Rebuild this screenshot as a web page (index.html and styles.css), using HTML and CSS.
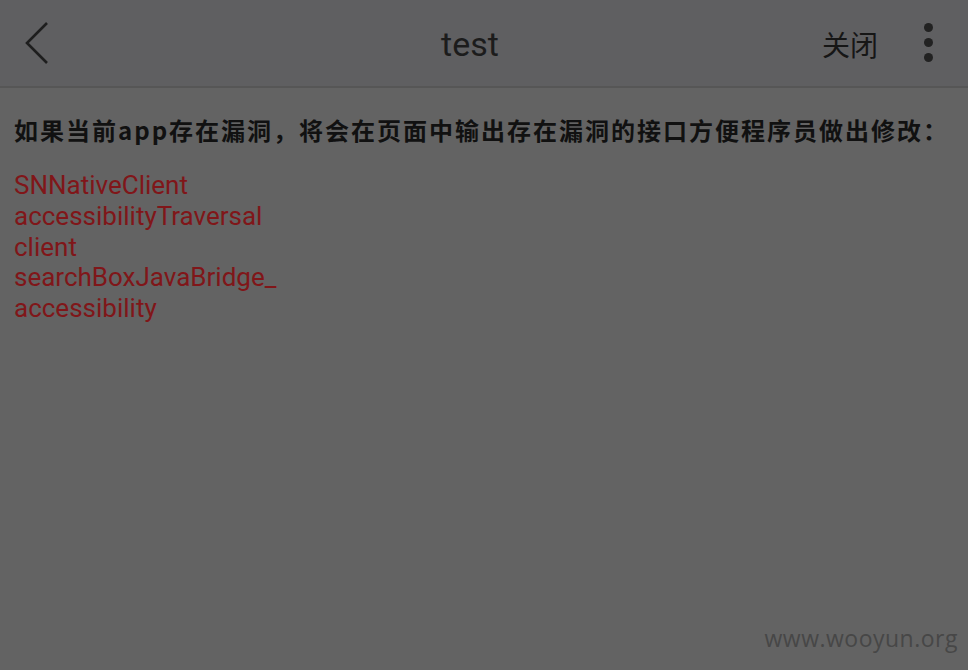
FILE: index.html
```html
<!DOCTYPE html>
<html lang="zh">
<head>
<meta charset="utf-8">
<link rel="stylesheet" href="styles.css">
</head>
<body>
<div class="app">
  <header class="bar">
    <div class="back">
      <svg width="26" height="44" viewBox="0 0 26 44"><path d="M23 2 L3 22 L23 42" fill="none" stroke="#1e1e1e" stroke-width="2.6"/></svg>
    </div>
    <div class="title">test</div>
    <div class="close">关闭</div>
    <div class="more"><span></span><span></span><span></span></div>
  </header>
  <main class="content">
    <p class="intro">如果当前app存在漏洞，将会在页面中输出存在漏洞的接口方便程序员做出修改：</p>
    <ul class="list">
      <li>SNNativeClient</li>
      <li>accessibilityTraversal</li>
      <li>client</li>
      <li>searchBoxJavaBridge_</li>
      <li>accessibility</li>
    </ul>
  </main>
  <div class="watermark">www.wooyun.org</div>
</div>
</body>
</html>
```
FILE: styles.css
```css
html, body { margin: 0; padding: 0; }
body { background: #636363; font-family: Roboto, "Noto Sans CJK SC", sans-serif; }
.app { position: relative; width: 968px; height: 670px; background: #636363; overflow: hidden; }
.bar {
  height: 86px; display: flex; align-items: center; background: #5f5f61;
  border-bottom: 2px solid #565656; position: relative;
}
.back { width: 26px; margin-left: 24px; display: flex; align-items: center; }
.title {
  position: absolute; left: 0; right: 28px; text-align: center; top: 22px;
  font-size: 34px; color: #1c1c1c; pointer-events: none; line-height: 44px;
}
.close {
  margin-left: auto; font-size: 28px; color: #161616; font-family: "Noto Sans CJK SC", sans-serif;
  margin-right: 46px; line-height: 40px; margin-top: 2px;
}
.more { display: flex; flex-direction: column; gap: 6px; margin-right: 35px; margin-top: -2px; }
.more span { width: 9px; height: 9px; border-radius: 50%; background: #222; }
.content { padding: 24px 14px 0; }
.intro {
  margin: 0; font-family: "Noto Sans CJK SC", sans-serif; font-weight: bold;
  font-size: 24px; letter-spacing: 2px; color: #111; line-height: 36px;
}
.list { list-style: none; margin: 22px 0 0; padding: 0; }
.list li { font-size: 26px; line-height: 30.8px; color: #801619; }
.watermark {
  position: absolute; right: 10px; bottom: 16px; font-family: "Open Sans", sans-serif;
  font-size: 23px; color: #474747; letter-spacing: 0.5px;
}
```
